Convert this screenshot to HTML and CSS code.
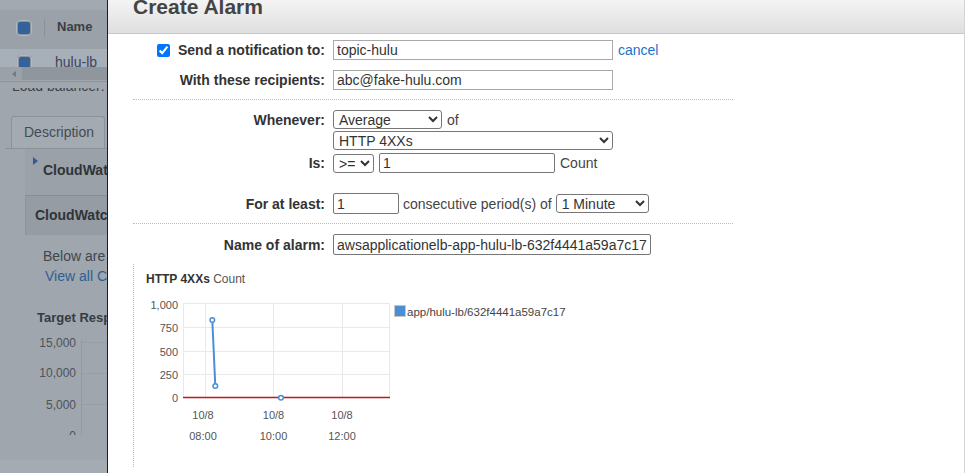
FILE: index.html
```html
<!DOCTYPE html>
<html>
<head>
<meta charset="utf-8">
<link rel="stylesheet" href="styles.css">
</head>
<body>
<div class="screen">
  <aside class="bg">
    <div class="bg-top"></div>
    <div class="bg-head"><span class="bg-check"></span><span class="bg-sep"></span><span class="bg-name">Name</span></div>
    <div class="bg-row"><span class="bg-check sm"></span><span class="bg-lb">hulu-lb</span></div>
    <div class="bg-scroll"><span class="bg-arrow"></span><span class="bg-thumb"></span></div>
    <div class="bg-rule"></div>
    <div class="bg-cut"><span>Load balancer: hulu-lb</span></div>
    <div class="bg-tabs"><span class="bg-tab">Description</span></div>
    <div class="bg-panel p1"><span class="tri"></span><span class="p1-text">CloudWatch metrics</span></div>
    <div class="bg-panel p2">CloudWatch alarms</div>
    <p class="bg-text">Below are your CloudWatch metrics</p>
    <a class="bg-link">View all CloudWatch metrics</a>
    <svg class="bg-chart" width="107" height="173" viewBox="0 300 107 173">
      <text x="37" y="321.5" class="bg-ctitle">Target Response Time</text>
      <path d="M82 342.5H107M82 373.5H107M82 404.5H107" stroke="#979ea5" fill="none"/>
      <path d="M81.5 340V436" stroke="#929aa1" fill="none"/>
      <g class="bg-ylab">
        <text x="76" y="347">15,000</text>
        <text x="76" y="377">10,000</text>
        <text x="76" y="408.5">5,000</text>
        <text x="76" y="440">0</text>
      </g>
      <rect x="0" y="435" width="107" height="25" fill="#9fa6ad"/>
      <rect x="0" y="460" width="107" height="13" fill="#a4abb2"/>
    </svg>
  </aside>

  <main class="modal">
    <header class="mhead"><h1 class="title">Create Alarm</h1></header>
    <div class="form">
      <div class="row r1">
        <label class="lbl"><input type="checkbox" class="cb" checked>Send a notification to:</label>
        <div class="ctl"><input class="txt light w280" value="topic-hulu"><a class="link">cancel</a></div>
      </div>
      <div class="row r2">
        <label class="lbl">With these recipients:</label>
        <div class="ctl"><input class="txt light w280" value="abc@fake-hulu.com"></div>
      </div>
      <div class="sep"></div>
      <div class="row">
        <label class="lbl">Whenever:</label>
        <div class="ctl"><select class="sel w109"><option>Average</option></select><span class="plain">of</span></div>
      </div>
      <div class="row r-metric">
        <span class="lbl"></span>
        <div class="ctl"><select class="sel w280"><option>HTTP 4XXs</option></select></div>
      </div>
      <div class="row r-is">
        <label class="lbl">Is:</label>
        <div class="ctl"><select class="sel w41"><option>&gt;=</option></select><input class="txt w176" value="1"><span class="plain">Count</span></div>
      </div>
      <div class="row r-least">
        <label class="lbl">For at least:</label>
        <div class="ctl tight"><input class="txt w66 h21" value="1"><span class="plain">consecutive period(s) of</span><select class="sel w93"><option>1 Minute</option></select></div>
      </div>
      <div class="sep"></div>
      <div class="row">
        <label class="lbl">Name of alarm:</label>
        <div class="ctl"><input class="txt w318 h21" value="awsapplicationelb-app-hulu-lb-632f4441a59a7c17"></div>
      </div>
      <div class="chartbox">
        <div class="ctitle"><b>HTTP 4XXs</b> <span class="unit">Count</span></div>
        <svg class="chart" width="466" height="172" viewBox="134 288 466 172">
          <g stroke="#e9e9e9" fill="none">
            <path d="M183 303.5H390M183 327.5H390M183 351.5H390M183 374.5H390"/>
            <path d="M205.5 303V398M273.5 303V398M342.5 303V398M389.5 303V398M183.5 303V398"/>
          </g>
          <path d="M183 397.5H390" stroke="#c4161c" stroke-width="1.6" fill="none"/>
          <g class="ylab">
            <text x="178" y="308.5">1,000</text>
            <text x="178" y="332">750</text>
            <text x="178" y="355.5">500</text>
            <text x="178" y="379">250</text>
            <text x="178" y="402">0</text>
          </g>
          <g class="xlab">
            <text x="203" y="419">10/8</text>
            <text x="203" y="440">08:00</text>
            <text x="273.5" y="419">10/8</text>
            <text x="273.5" y="440">10:00</text>
            <text x="342" y="419">10/8</text>
            <text x="342" y="440">12:00</text>
          </g>
          <path d="M212.3 320L215.3 386" stroke="#4a8fd6" stroke-width="2" fill="none"/>
          <g fill="#fff" stroke="#4a8fd6" stroke-width="1.5">
            <circle cx="212.3" cy="320" r="2.3"/>
            <circle cx="215.3" cy="386" r="2.3"/>
            <circle cx="281" cy="397.7" r="2.3"/>
          </g>
          <rect x="394.5" y="305.5" width="11" height="11" fill="#4a8fd6" stroke="#c8c8c8"/>
          <text x="407" y="316" class="legend">app/hulu-lb/632f4441a59a7c17</text>
        </svg>
      </div>
    </div>
  </main>
</div>
</body>
</html>
```

FILE: styles.css
```css
* { box-sizing: border-box; }
html, body { margin: 0; padding: 0; }
body {
  font-family: "Liberation Sans", Arial, sans-serif;
  font-size: 14px;
  background: #fff;
  overflow: hidden;
}
.screen { display: flex; width: 965px; height: 473px; overflow: hidden; }

/* dimmed background page */
.bg {
  width: 107px;
  flex: none;
  background: #9fa6ad;
  overflow: hidden;
  white-space: nowrap;
  color: #41474d;
  display: flex;
  flex-direction: column;
}
.bg-top { height: 10px; flex: none; background: #a2a9b0; }
.bg-head {
  height: 39px; flex: none;
  background: #9aa1a8;
  display: flex; align-items: flex-start;
  padding: 10px 0 0 16px;
}
.bg-check {
  width: 16px; height: 16px; flex: none;
  border-radius: 4px;
  background: #33639a;
  box-shadow: 0 0 0 1px #b2b8be inset, 0 0 0 2px #8d949b inset;
  margin-right: 12px;
}
.bg-check.sm { width: 15px; height: 15px; margin-right: 23px; }
.bg-sep { width: 1px; height: 18px; margin-top: -1px; background: #8a9198; margin-right: 12px; flex: none; }
.bg-name { font-weight: bold; font-size: 13px; line-height: 16px; margin-top: -1px; color: #3a3f45; }
.bg-row {
  height: 18px; flex: none; overflow: hidden;
  background: #a7afb8;
  display: flex; align-items: flex-start;
  padding: 6px 0 0 17px;
}
.bg-lb { font-size: 14px; line-height: 16px; margin-top: -1px; color: #3e4360; }
.bg-scroll { height: 13px; flex: none; background: #9aa1a8; display: flex; align-items: center; }
.bg-arrow {
  width: 0; height: 0; margin-left: 12px; margin-right: 6px;
  border-top: 3px solid transparent; border-bottom: 3px solid transparent;
  border-right: 4px solid #737a80;
}
.bg-thumb { flex: 1; height: 13px; background: #8f969d; }
.bg-rule { height: 1px; flex: none; margin-top: 1px; background: #8c939a; }
.bg-cut { height: 4px; flex: none; overflow: hidden; margin-top: 6px; padding-left: 12px; }
.bg-cut span { display: block; font-size: 14px; line-height: 16px; margin-top: -10px; color: #3e4349; }
.bg-tabs {
  flex: none;
  margin: 24px 0 0 5px;
  border-bottom: 1px solid #8b9298;
  padding-left: 6px;
  height: 33px;
}
.bg-tab {
  display: block; width: 94px; height: 32px;
  border: 1px solid #8b9298; border-bottom: none;
  border-radius: 3px 3px 0 0;
  background: #a3aab1;
  padding-left: 12px;
  line-height: 30px;
  color: #454b53;
}
.bg-panel { flex: none; margin-left: 25px; font-weight: bold; color: #2f3439; }
.bg-panel.p1 {
  height: 46px; background: #9aa1a8;
  display: flex; align-items: flex-start;
  padding: 8px 0 0 8px;
}
.tri {
  width: 0; height: 0; flex: none;
  border-top: 4px solid transparent; border-bottom: 4px solid transparent;
  border-left: 5px solid #2d5e9a;
  margin-right: 5px;
}
.p1-text { line-height: 16px; margin-top: 5px; }
.bg-panel.p2 {
  height: 40px; background: #959ca3;
  border-top: 1px solid #878e95;
  border-left: 1px solid #8d949b;
  padding-left: 9px; line-height: 39px;
}
.bg-text { margin: 12px 0 0 43px; line-height: 18px; color: #41474d; flex: none; }
.bg-link { margin: 2px 0 0 45px; line-height: 18px; color: #2e6094; flex: none; display: block; }
.bg-chart { display: block; flex: none; margin-top: 15px; }
.bg-chart text { font-family: "Liberation Sans", Arial, sans-serif; }
.bg-ctitle { font-weight: bold; font-size: 13px; fill: #363b41; }
.bg-ylab text { font-size: 12px; fill: #4d5359; text-anchor: end; }

/* modal */
.modal {
  flex: 1; min-width: 0;
  background: #fff;
  border-left: 1px solid #1e1e1e;
  border-right: 1px solid #d4d4d4;
  display: flex; flex-direction: column;
  overflow: hidden;
}
.mhead {
  height: 34px; flex: none;
  background: linear-gradient(#f4f4f4, #dfdfdf);
  border-bottom: 1px solid #c6c6c6;
  padding-left: 25px;
  overflow: hidden;
}
.title {
  margin: -4px 0 0 0;
  font-size: 21px; line-height: 21px;
  font-weight: bold; color: #444;
}
.form { width: 625px; padding-left: 25px; }
.row {
  display: grid;
  grid-template-columns: 192px auto;
  column-gap: 8px;
  align-items: center;
  margin-top: 2px;
}
.row.r1 { margin-top: 6px; }
.row.r2 { margin-top: 10px; }
.row.r-metric { margin-top: 2px; }
.row.r-is { margin-top: 3px; }
.row.r-least { margin-top: 20px; }
.lbl {
  font-weight: bold; color: #333;
  display: flex; justify-content: flex-end; align-items: center;
  gap: 8px; white-space: nowrap;
}
.cb { width: 13px; height: 13px; margin: 0; }
.ctl { display: flex; align-items: center; gap: 5px; white-space: nowrap; }
.ctl.tight { gap: 4px; }
.plain { color: #444; }
.link { color: #1a73c8; cursor: pointer; }
.txt {
  font-family: "Liberation Sans", Arial, sans-serif;
  font-size: 14px; color: #333;
  height: 20px;
  padding: 0 3px;
  border: 1px solid #767676;
  border-radius: 2px;
  background: #fff;
  margin: 0;
}
.txt.light { border-color: #a9a9a9; border-radius: 0; }
.h21 { height: 21px; }
.sel {
  font-family: "Liberation Sans", Arial, sans-serif;
  font-size: 14px; color: #333;
  height: 19px;
  padding: 0 0 0 1px;
  border: 1px solid #767676;
  border-radius: 3px;
  background: #fff;
  margin: 0;
}
.w280 { width: 280px; }
.w109 { width: 109px; }
.w41 { width: 41px; }
.w176 { width: 176px; }
.w66 { width: 66px; }
.w93 { width: 93px; }
.w318 { width: 318px; }
.sep { border-top: 1px dotted #bdbdbd; margin: 9px 0 10px 0; height: 0; }
.chartbox {
  margin-top: 9px;
  padding-top: 8px;
  border-left: 1px dotted #bdbdbd;
  height: 203px;
}
.ctitle {
  padding-left: 12px;
  font-size: 12px; line-height: 14px;
  color: #333;
}
.ctitle .unit { color: #555; }
.chart { display: block; margin-top: 2px; }
.chart text { font-family: "Liberation Sans", Arial, sans-serif; }
.ylab text { font-size: 11px; fill: #555; text-anchor: end; }
.xlab text { font-size: 11px; fill: #555; text-anchor: middle; }
.legend { font-size: 11.5px; fill: #444; }
```
